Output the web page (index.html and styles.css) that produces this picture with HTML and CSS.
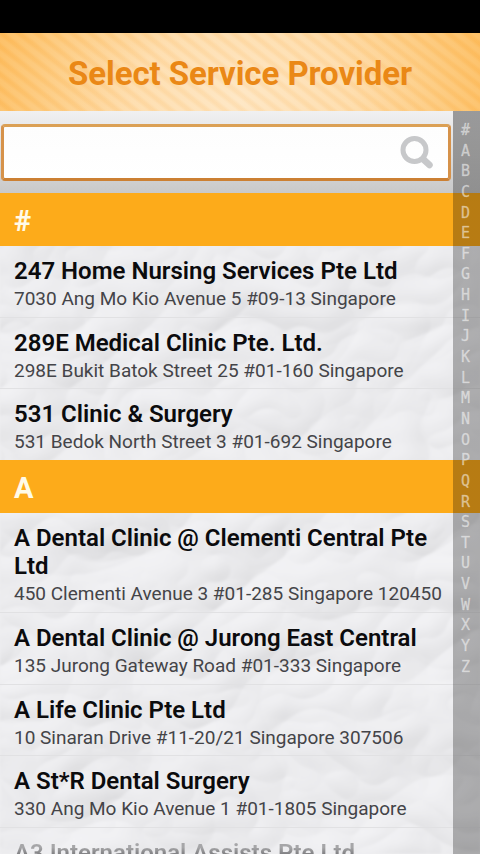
FILE: index.html
```
<!DOCTYPE html>
<html lang="en">
<head>
  <meta charset="UTF-8" />
  <meta name="viewport" content="width=device-width, initial-scale=1.0"/>
  <title>Select Service Provider</title>
  <link rel="stylesheet" href="styles.css">
</head>
<body>
  <div class="status-bar"></div>

  <header class="title-bar">
    <h1>Select Service Provider</h1>
  </header>

  <main class="content">
    <!-- crumpled paper behind the list -->
    <svg class="paper" aria-hidden="true">
      <defs>
        <filter id="crumple" x="0" y="0" width="100%" height="100%" color-interpolation-filters="sRGB">
          <feTurbulence type="turbulence" baseFrequency="0.007 0.009" numOctaves="3" seed="12" result="noise"/>
          <feDiffuseLighting in="noise" surfaceScale="5" diffuseConstant="1.04" lighting-color="#f0f0f3">
            <feDistantLight azimuth="235" elevation="68"/>
          </feDiffuseLighting>
          <feGaussianBlur stdDeviation="0.8"/>
        </filter>
      </defs>
      <rect width="100%" height="100%" filter="url(#crumple)"/>
    </svg>

    <div class="search">
      <div class="search-box">
        <input type="text" aria-label="Search">
        <svg class="search-icon" viewBox="0 0 34 34">
          <circle cx="14.5" cy="14" r="11.5"/>
          <path d="M23.5 23.5L29.5 29"/>
        </svg>
      </div>
    </div>

    <section>
      <h2 class="section-title">#</h2>
      <ul class="providers">
        <li>
          <h3>247 Home Nursing Services Pte Ltd</h3>
          <p>7030 Ang Mo Kio Avenue 5 #09-13 Singapore</p>
        </li>
        <li>
          <h3>289E Medical Clinic Pte. Ltd.</h3>
          <p>298E Bukit Batok Street 25 #01-160 Singapore</p>
        </li>
        <li>
          <h3>531 Clinic &amp; Surgery</h3>
          <p>531 Bedok North Street 3 #01-692 Singapore</p>
        </li>
      </ul>
    </section>

    <section>
      <h2 class="section-title">A</h2>
      <ul class="providers">
        <li>
          <h3>A Dental Clinic @ Clementi Central Pte Ltd</h3>
          <p>450 Clementi Avenue 3 #01-285 Singapore 120450</p>
        </li>
        <li>
          <h3>A Dental Clinic @ Jurong East Central</h3>
          <p>135 Jurong Gateway Road #01-333 Singapore</p>
        </li>
        <li>
          <h3>A Life Clinic Pte Ltd</h3>
          <p>10 Sinaran Drive #11-20/21 Singapore 307506</p>
        </li>
        <li>
          <h3>A St*R Dental Surgery</h3>
          <p>330 Ang Mo Kio Avenue 1 #01-1805 Singapore</p>
        </li>
        <li class="fading">
          <h3>A3 International Assists Pte Ltd</h3>
        </li>
      </ul>
    </section>

    <nav class="index">
      <span>#</span>
      <span>A</span>
      <span>B</span>
      <span>C</span>
      <span>D</span>
      <span>E</span>
      <span>F</span>
      <span>G</span>
      <span>H</span>
      <span>I</span>
      <span>J</span>
      <span>K</span>
      <span>L</span>
      <span>M</span>
      <span>N</span>
      <span>O</span>
      <span>P</span>
      <span>Q</span>
      <span>R</span>
      <span>S</span>
      <span>T</span>
      <span>U</span>
      <span>V</span>
      <span>W</span>
      <span>X</span>
      <span>Y</span>
      <span>Z</span>
    </nav>
  </main>
</body>
</html>
```
FILE: styles.css
```
* {
  margin: 0;
  padding: 0;
  box-sizing: border-box;
}

body {
  height: 100vh;
  display: flex;
  flex-direction: column;
  overflow: hidden;
  background: #000;
  font-family: Roboto, "Liberation Sans", sans-serif;
}

.status-bar {
  height: 33px;
  flex: none;
}

.title-bar {
  height: 78px;
  flex: none;
  display: flex;
  align-items: center;
  justify-content: center;
  padding-top: 3px;
  background:
    repeating-linear-gradient(38deg, rgba(255, 255, 255, 0.08) 0 3px, rgba(250, 165, 60, 0.1) 6px 8px, rgba(255, 255, 255, 0.08) 11px),
    radial-gradient(ellipse 270px 190px at 50% 85%, #fee6c2 0%, #fedcaa 40%, #fdc878 75%, #fdb955 100%);
}

.title-bar h1 {
  font-size: 33px;
  font-weight: 700;
  letter-spacing: -0.07px;
  line-height: 40px;
  color: #ea8816;
}

.content {
  position: relative;
  flex: 1;
  min-height: 0;
  overflow: hidden;
  background: #efeff1;
}

.paper {
  position: absolute;
  inset: 0;
  width: 100%;
  height: 100%;
  opacity: 0.42;
}

.search {
  position: relative;
  height: 82px;
  padding: 13px 29px 12px 1px;
  background: linear-gradient(#f0f0f1, #c9c9c9);
}

.search-box {
  height: 57px;
  display: flex;
  align-items: center;
  padding-right: 14px;
  border: 3px solid;
  border-color: #dba055 #d6924a #cc8033 #d6924a;
  border-radius: 4px;
  background: linear-gradient(#fdfdfd, #fff);
}

.search-box input {
  flex: 1;
  min-width: 0;
  height: 100%;
  border: none;
  outline: none;
  background: transparent;
  font-size: 22px;
}

.search-icon {
  width: 34px;
  height: 34px;
  fill: none;
  stroke: #c7c8ca;
  stroke-width: 5;
}

.search-icon path {
  stroke-width: 6.5;
  stroke-linecap: round;
}

section {
  position: relative;
}

.section-title {
  height: 53px;
  padding-left: 14px;
  background: #fdab1a;
  color: #fffbe8;
  font-size: 29px;
  font-weight: 700;
  line-height: 56px;
}

.providers {
  list-style: none;
}

.providers li {
  padding: 11px 36px 5px 14px;
  border-bottom: 1px solid #e1e1e3;
}

.providers li:last-child {
  border-bottom: none;
}

.providers h3 {
  font-size: 24px;
  font-weight: 600;
  line-height: 28px;
  color: #0b0b0d;
}

.providers p {
  margin: 2px -36px 0 0;
  font-size: 19px;
  line-height: 24.7px;
  color: #444448;
  white-space: nowrap;
}

.providers .fading h3 {
  background: linear-gradient(#a6a6a8 30%, #77777a 60%);
  background-clip: text;
  color: transparent;
}

.index {
  position: absolute;
  top: 0;
  right: 0;
  bottom: 0;
  width: 27px;
  padding: 9px 2px 0 0;
  display: flex;
  flex-direction: column;
  align-items: center;
  background: linear-gradient(rgba(0, 0, 0, 0.36), rgba(0, 0, 0, 0.28) 90px);
}

.index span {
  height: 20.65px;
  flex: none;
  font-family: "DejaVu Sans Mono", monospace;
  font-size: 15px;
  line-height: 20.65px;
  color: rgba(255, 255, 255, 0.5);
  -webkit-text-stroke: 0.4px rgba(255, 255, 255, 0.3);
}
```
